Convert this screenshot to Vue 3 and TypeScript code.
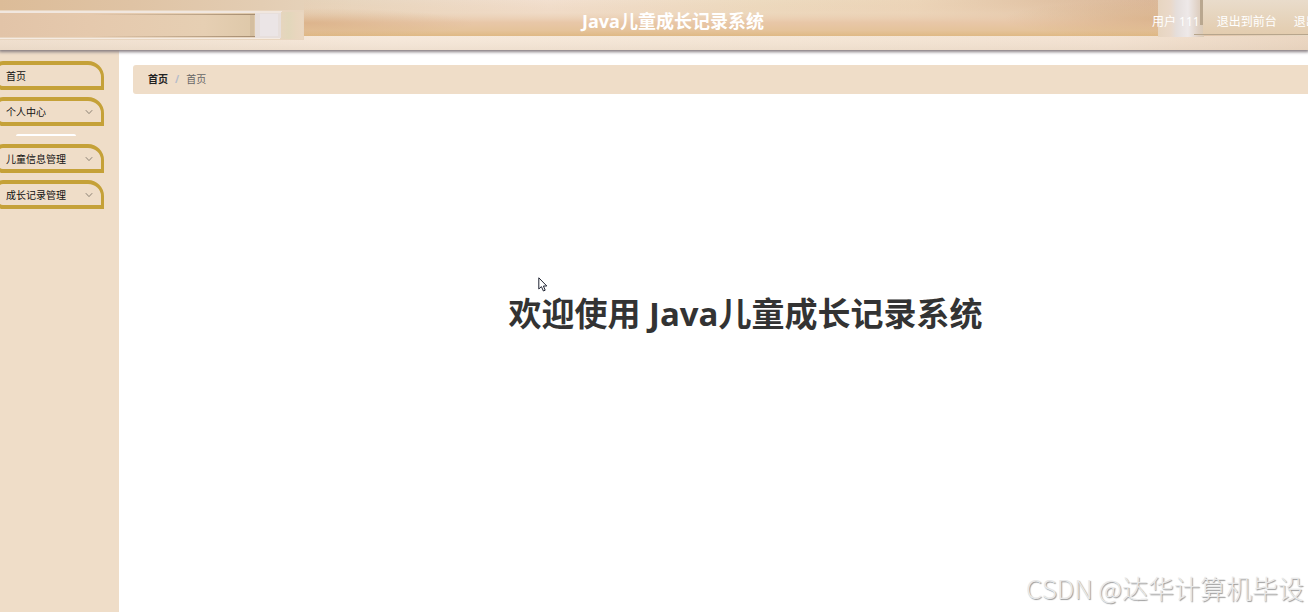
<script setup lang="ts">
import { ref } from 'vue'

interface MenuEntry {
  label: string
  expandable: boolean
  spaced: boolean
}

const systemName = 'Java儿童成长记录系统'
const menu: MenuEntry[] = [
  { label: '首页', expandable: false, spaced: false },
  { label: '个人中心', expandable: true, spaced: true },
  { label: '儿童信息管理', expandable: true, spaced: false },
  { label: '成长记录管理', expandable: true, spaced: false },
]
const current = ref('首页')
</script>

<template>
  <div class="layout">
    <header class="topbar">
      <svg class="backdrop" viewBox="0 0 1308 50" preserveAspectRatio="none" aria-hidden="true">
        <defs>
          <linearGradient id="base" x1="0" y1="0" x2="1" y2="0">
            <stop offset="0" stop-color="#dcbc98" />
            <stop offset="0.1" stop-color="#dfc3a4" />
            <stop offset="0.2" stop-color="#e3cdb3" />
            <stop offset="0.27" stop-color="#e8d6bf" />
            <stop offset="0.42" stop-color="#f2e0d0" />
            <stop offset="0.58" stop-color="#eddbc0" />
            <stop offset="0.7" stop-color="#ecd5b9" />
            <stop offset="0.8" stop-color="#e1c3a5" />
            <stop offset="0.88" stop-color="#dbb899" />
            <stop offset="1" stop-color="#e8dac5" />
          </linearGradient>
          <linearGradient id="glow" x1="0" y1="0" x2="0" y2="1">
            <stop offset="0" stop-color="#e9c8a8" stop-opacity="0" />
            <stop offset="0.35" stop-color="#ecd3b8" stop-opacity="0.4" />
            <stop offset="0.62" stop-color="#e8c7a8" />
            <stop offset="0.85" stop-color="#e5c39a" />
            <stop offset="1" stop-color="#dfb985" />
          </linearGradient>
          <radialGradient id="shade" cx="0" cy="0.5" r="0.5">
            <stop offset="0" stop-color="#d3a577" stop-opacity="0.55" />
            <stop offset="0.5" stop-color="#d3a577" stop-opacity="0.25" />
            <stop offset="1" stop-color="#d3a577" stop-opacity="0" />
          </radialGradient>
          <radialGradient id="shadeRight" cx="1" cy="0.5" r="0.5">
            <stop offset="0" stop-color="#d0a273" stop-opacity="0.5" />
            <stop offset="1" stop-color="#d0a273" stop-opacity="0" />
          </radialGradient>
          <linearGradient id="drawer" x1="0" y1="0" x2="1" y2="0">
            <stop offset="0" stop-color="#e2c4a8" />
            <stop offset="0.35" stop-color="#e5c9ad" />
            <stop offset="0.8" stop-color="#e6cfb3" />
            <stop offset="1" stop-color="#dec8a9" />
          </linearGradient>
          <linearGradient id="line" x1="0" y1="0" x2="1" y2="0">
            <stop offset="0" stop-color="#a68d71" stop-opacity="0" />
            <stop offset="1" stop-color="#a68d71" />
          </linearGradient>
          <linearGradient id="rail" x1="0" y1="0" x2="1" y2="0">
            <stop offset="0" stop-color="#ecdccb" />
            <stop offset="0.3" stop-color="#f4e7da" />
            <stop offset="0.6" stop-color="#f2e4d4" />
            <stop offset="0.85" stop-color="#f0dfcf" />
            <stop offset="1" stop-color="#e5cfb9" />
          </linearGradient>
          <linearGradient id="railshade" x1="0" y1="0" x2="0" y2="1">
            <stop offset="0" stop-color="#fff0e0" stop-opacity="0.2" />
            <stop offset="1" stop-color="#e6d4c0" stop-opacity="0.4" />
          </linearGradient>
          <linearGradient id="post" x1="0" y1="0" x2="1" y2="0">
            <stop offset="0" stop-color="#e7d5c0" />
            <stop offset="0.28" stop-color="#ead9ca" />
            <stop offset="0.4" stop-color="#e5dedb" />
            <stop offset="0.65" stop-color="#eee9e9" />
            <stop offset="0.88" stop-color="#dfd0c3" />
            <stop offset="1" stop-color="#dacab5" />
          </linearGradient>
          <linearGradient id="cupboard" x1="0" y1="0" x2="0" y2="1">
            <stop offset="0" stop-color="#e9dccb" />
            <stop offset="1" stop-color="#e3ccae" />
          </linearGradient>
          <linearGradient id="edge" x1="0" y1="0" x2="1" y2="0">
            <stop offset="0" stop-color="#e6d5be" />
            <stop offset="0.35" stop-color="#e2d7bb" />
            <stop offset="0.7" stop-color="#e8d6be" />
            <stop offset="1" stop-color="#ead7c1" />
          </linearGradient>
        </defs>
        <rect width="1308" height="50" fill="url(#base)" />
        <rect x="304" width="854" height="36" fill="url(#glow)" />
        <rect x="304" y="8" width="340" height="30" fill="url(#shade)" />
        <rect x="850" y="0" width="308" height="38" fill="url(#shadeRight)" />
        <rect y="36" width="1308" height="14" fill="url(#rail)" />
        <rect y="36" width="1308" height="14" fill="url(#railshade)" />
        <rect y="10" width="304" height="30" fill="#e8d5bf" />
        <rect y="11" width="282" height="2" fill="#f1e7df" />
        <rect y="13" width="255" height="24" fill="url(#drawer)" />
        <rect x="90" y="14" width="165" height="1" fill="url(#line)" />
        <rect x="90" y="36" width="165" height="1" fill="url(#line)" />
        <rect x="250" y="15" width="4" height="21" fill="#d4be9f" />
        <rect y="38" width="280" height="1" fill="#f5ebe2" />
        <rect x="255" y="13" width="26" height="25" fill="#e7dfdc" />
        <rect x="260" y="14" width="18" height="22" fill="#ebe5e6" />
        <rect x="281" y="12" width="22" height="27" fill="url(#edge)" />
        <rect x="1158" width="46" height="37" fill="url(#post)" />
        <rect x="1203" width="105" height="35" fill="url(#cupboard)" />
        <rect x="1200" width="3" height="25" fill="#b9a78f" />
        <rect x="1194" y="34" width="114" height="1" fill="#b7a58c" />
      </svg>
      <h1 class="brand">{{ systemName }}</h1>
      <nav class="account" aria-label="账户">
        <span>用户 111</span>
        <a href="#front">退出到前台</a>
        <a href="#logout">退出</a>
      </nav>
    </header>

    <div class="body">
      <aside class="sidebar">
        <ul class="menu">
          <li v-for="item in menu" :key="item.label" :class="{ spaced: item.spaced }">
            <button type="button" class="entry" @click="current = item.label">
              <span>{{ item.label }}</span>
              <svg v-if="item.expandable" class="chevron" viewBox="0 0 8 6" aria-hidden="true">
                <path d="M0.8 1.2 L4 4.6 L7.2 1.2" />
              </svg>
            </button>
          </li>
        </ul>
      </aside>

      <main class="content">
        <nav class="crumbs" aria-label="面包屑">
          <a href="#home">首页</a>
          <span class="slash">/</span>
          <span>首页</span>
        </nav>
        <h2 class="welcome">欢迎使用 {{ systemName }}</h2>
      </main>
    </div>

    <svg class="pointer" viewBox="0 0 10 15" aria-hidden="true">
      <path d="M0.8 0.8 V12 L3.4 9.6 L5.4 14 L7.2 13.2 L5.4 9 H8.8 Z" />
    </svg>
    <div class="watermark">CSDN @达华计算机毕设</div>
  </div>
</template>

<style>
body {
  margin: 0;
}
</style>

<style scoped>
.layout {
  position: relative;
  display: flex;
  flex-direction: column;
  min-height: 100vh;
  overflow: hidden;
  background: #fff;
  color: #333;
  font-family: "Open Sans", "Noto Sans CJK SC", sans-serif;
  font-size: 10px;
}

.topbar {
  position: relative;
  z-index: 1;
  display: grid;
  height: 50px;
  box-shadow: 0 1px 3px 1px #857c80;
}

.backdrop {
  position: absolute;
  width: 100%;
  height: 100%;
}

.brand {
  position: relative;
  align-self: center;
  margin: 0;
  padding: 0 0 8px 38px;
  text-align: center;
  color: #fff;
  font-size: 18px;
  line-height: 24px;
}

.account {
  position: absolute;
  top: 12px;
  left: calc(100% - 156px);
  display: flex;
  gap: 17px;
  color: #fff;
  font-size: 12px;
  line-height: 20px;
  white-space: nowrap;
}

.account a {
  color: inherit;
  text-decoration: none;
}

.body {
  display: flex;
  flex: 1;
}

.sidebar {
  flex: none;
  width: 119px;
  background: #efddc8;
}

.menu {
  display: flex;
  flex-direction: column;
  gap: 7px;
  margin: 11px 15px 0 -5px;
  padding: 0;
  list-style: none;
}

.spaced::after {
  content: "";
  display: block;
  width: 60px;
  height: 2px;
  margin: 8px 0 1px 21px;
  border-radius: 8px 8px 0 0;
  background: #fff;
}

.entry {
  display: flex;
  align-items: center;
  justify-content: space-between;
  box-sizing: border-box;
  width: 100%;
  height: 29px;
  padding: 0 8px 0 7px;
  border: 4px solid #c5a138;
  border-right-width: 3px;
  border-radius: 8px 16px 0 8px;
  background: #efddc8;
  color: #111;
  font: inherit;
  line-height: 20px;
  cursor: pointer;
}

.chevron {
  width: 8px;
  height: 6px;
  fill: none;
  stroke: #8b8174;
}

.content {
  display: flex;
  flex: 1;
  flex-direction: column;
  min-width: 0;
  padding: 15px 0 0 14px;
}

.crumbs {
  display: flex;
  align-items: center;
  gap: 7px;
  box-sizing: border-box;
  height: 29px;
  padding: 0 0 2px 15px;
  border-radius: 3px 0 0 3px;
  background: #efddc8;
  color: #666;
}

.crumbs a {
  color: #222;
  font-weight: 700;
  text-decoration: none;
}

.slash {
  color: #b5bccb;
  font-weight: 700;
}

.welcome {
  margin: 196px 0 0;
  padding-right: 82px;
  box-sizing: border-box;
  width: calc(100% + 132px);
  text-align: center;
  font-size: 33px;
  line-height: 48px;
  white-space: nowrap;
}

.pointer {
  position: absolute;
  top: 277px;
  left: 538px;
  width: 10px;
  height: 15px;
  fill: #fff;
  stroke: #222634;
}

.watermark {
  position: absolute;
  right: 4px;
  bottom: 6px;
  color: #e9e9e9;
  font-family: "Noto Sans CJK SC", sans-serif;
  font-size: 26px;
  font-weight: 300;
  line-height: 36px;
  text-shadow: 1px 1px 1px #999;
}
</style>
